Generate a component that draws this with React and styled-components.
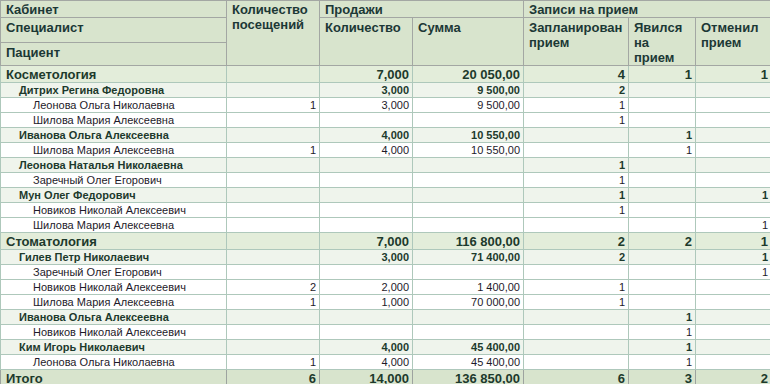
import React from 'react';
import styled, { createGlobalStyle } from 'styled-components';

const GlobalStyle = createGlobalStyle`
  html, body {
    margin: 0;
    padding: 0;
    overflow: hidden;
    background: #ffffff;
  }
`;

const rows = [
  { kind: 'group', name: 'Косметология', qty: '7,000', sum: '20 050,00', plan: '4', came: '1', cancel: '1' },
  { kind: 'spec', name: 'Дитрих Регина Федоровна', qty: '3,000', sum: '9 500,00', plan: '2' },
  { kind: 'pat', name: 'Леонова Ольга Николаевна', visits: '1', qty: '3,000', sum: '9 500,00', plan: '1' },
  { kind: 'pat', name: 'Шилова Мария Алексеевна', plan: '1' },
  { kind: 'spec', name: 'Иванова Ольга Алексеевна', qty: '4,000', sum: '10 550,00', came: '1' },
  { kind: 'pat', name: 'Шилова Мария Алексеевна', visits: '1', qty: '4,000', sum: '10 550,00', came: '1' },
  { kind: 'spec', name: 'Леонова Наталья Николаевна', plan: '1' },
  { kind: 'pat', name: 'Заречный Олег Егорович', plan: '1' },
  { kind: 'spec', name: 'Мун Олег Федорович', plan: '1', cancel: '1' },
  { kind: 'pat', name: 'Новиков Николай Алексеевич', plan: '1' },
  { kind: 'pat', name: 'Шилова Мария Алексеевна', cancel: '1' },
  { kind: 'group', name: 'Стоматология', qty: '7,000', sum: '116 800,00', plan: '2', came: '2', cancel: '1' },
  { kind: 'spec', name: 'Гилев Петр Николаевич', qty: '3,000', sum: '71 400,00', plan: '2', cancel: '1' },
  { kind: 'pat', name: 'Заречный Олег Егорович', cancel: '1' },
  { kind: 'pat', name: 'Новиков Николай Алексеевич', visits: '2', qty: '2,000', sum: '1 400,00', plan: '1' },
  { kind: 'pat', name: 'Шилова Мария Алексеевна', visits: '1', qty: '1,000', sum: '70 000,00', plan: '1' },
  { kind: 'spec', name: 'Иванова Ольга Алексеевна', came: '1' },
  { kind: 'pat', name: 'Новиков Николай Алексеевич', came: '1' },
  { kind: 'spec', name: 'Ким Игорь Николаевич', qty: '4,000', sum: '45 400,00', came: '1' },
  { kind: 'pat', name: 'Леонова Ольга Николаевна', visits: '1', qty: '4,000', sum: '45 400,00', came: '1' },
];

const total = { name: 'Итого', visits: '6', qty: '14,000', sum: '136 850,00', plan: '6', came: '3', cancel: '2' };

const rowLook = {
  group: { bg: '#e3edda', color: '#1d3a2c', size: '13px', weight: 700, height: '17px', indent: '5px' },
  spec: { bg: '#eff4ec', color: '#1d3a2c', size: '11px', weight: 700, height: '15px', indent: '18px' },
  pat: { bg: '#ffffff', color: '#1e1a2a', size: '11px', weight: 400, height: '15px', indent: '32px' },
  total: { bg: '#d8e4cd', color: '#1d3a2c', size: '13px', weight: 700, height: '17px', indent: '5px' },
};

const Report = styled.table`
  border-collapse: collapse;
  table-layout: fixed;
  width: 771px;
  font-family: 'Liberation Sans', Arial, sans-serif;
`;

const HeadCell = styled.th`
  background: #d8e4cd;
  color: #1c3836;
  font-size: 13px;
  font-weight: 700;
  line-height: 15px;
  text-align: left;
  vertical-align: top;
  padding: ${(p) => (p.$top ? '1px 4px 0 5px' : '2px 4px 0 5px')};
  border: 1px solid #a3a7a3;
  white-space: normal;
  overflow: hidden;
`;

const HeadRow = styled.tr`
  height: ${(p) => p.$h};
`;

const Row = styled.tr`
  height: ${(p) => rowLook[p.$kind].height};
  background: ${(p) => rowLook[p.$kind].bg};
  color: ${(p) => rowLook[p.$kind].color};
  font-size: ${(p) => rowLook[p.$kind].size};
  font-weight: ${(p) => rowLook[p.$kind].weight};
`;

const Cell = styled.td`
  padding: 0 3px 0 4px;
  line-height: 13px;
  white-space: nowrap;
  overflow: hidden;
  text-align: right;
  border: 1px solid ${(p) => (p.$total ? '#9da39f' : '#aec8bb')};
`;

const NameCell = styled(Cell)`
  text-align: left;
  padding-left: ${(p) => rowLook[p.$kind].indent};
`;

const cols = [226, 93, 93, 111, 105, 67, 76];

function DataRow({ row, kind }) {
  const isTotal = kind === 'total';
  return (
    <Row $kind={kind}>
      <NameCell $kind={kind} $total={isTotal}>{row.name}</NameCell>
      <Cell $total={isTotal}>{row.visits}</Cell>
      <Cell $total={isTotal}>{row.qty}</Cell>
      <Cell $total={isTotal}>{row.sum}</Cell>
      <Cell $total={isTotal}>{row.plan}</Cell>
      <Cell $total={isTotal}>{row.came}</Cell>
      <Cell $total={isTotal}>{row.cancel}</Cell>
    </Row>
  );
}

export default function App() {
  return (
    <>
      <GlobalStyle />
      <Report>
        <colgroup>
          {cols.map((w, i) => (
            <col key={i} style={{ width: w }} />
          ))}
        </colgroup>
        <thead>
          <HeadRow $h="17px">
            <HeadCell $top>Кабинет</HeadCell>
            <HeadCell $top rowSpan={3}>Количество посещений</HeadCell>
            <HeadCell $top colSpan={2}>Продажи</HeadCell>
            <HeadCell $top colSpan={3}>Записи на прием</HeadCell>
          </HeadRow>
          <HeadRow $h="25px">
            <HeadCell>Специалист</HeadCell>
            <HeadCell rowSpan={2}>Количество</HeadCell>
            <HeadCell rowSpan={2}>Сумма</HeadCell>
            <HeadCell rowSpan={2}>Запланирован прием</HeadCell>
            <HeadCell rowSpan={2}>Явился на прием</HeadCell>
            <HeadCell rowSpan={2}>Отменил прием</HeadCell>
          </HeadRow>
          <HeadRow $h="23px">
            <HeadCell>Пациент</HeadCell>
          </HeadRow>
        </thead>
        <tbody>
          {rows.map((r, i) => (
            <DataRow key={i} row={r} kind={r.kind} />
          ))}
          <DataRow row={total} kind="total" />
        </tbody>
      </Report>
    </>
  );
}
